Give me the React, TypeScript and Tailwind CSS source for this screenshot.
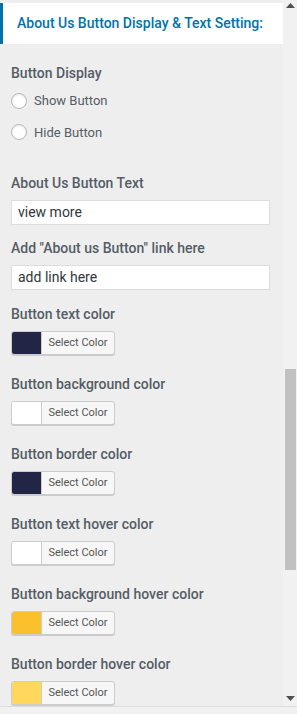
import React from "react";

const font = { fontFamily: "Roboto, 'Noto Sans', sans-serif" };

function Label({ children }: { children: React.ReactNode }) {
  return (
    <div className="text-[14px] leading-[20px] font-medium text-[#555d66]">{children}</div>
  );
}

function ColorItem({ label, color }: { label: string; color: string }) {
  return (
    <div className="flex flex-col">
      <Label>{label}</Label>
      <div className="mt-[7px] flex h-[24px] w-[104px] overflow-hidden rounded-[3px] border border-[#cccccc] bg-[#f7f7f7] shadow-[0_1px_0_#cccccc]">
        <div className="h-full w-[30px] border-r border-[#cccccc]" style={{ backgroundColor: color }} />
        <div className="flex flex-1 items-center justify-center text-[11px] text-[#555555]">Select Color</div>
      </div>
    </div>
  );
}

function Radio({ label }: { label: string }) {
  return (
    <div className="flex items-center gap-[7px]">
      <div className="h-[16px] w-[16px] rounded-full border border-[#b4b9be] bg-white shadow-[inset_0_1px_2px_rgba(0,0,0,0.1)]" />
      <span className="text-[13px] text-[#555d66]">{label}</span>
    </div>
  );
}

export default function App() {
  return (
    <div className="w-[297px] h-[714px] bg-[#eeeeee] overflow-hidden" style={font}>
      <div className="flex h-[707px] border-b border-[#dddddd]">
        <div className="flex-1 overflow-hidden">
          <div className="mt-[3px] flex h-[41px] items-center border-l-[3px] border-[#0073aa] bg-white pl-[14px]">
            <span className="text-[14px] font-medium text-[#0073aa]">About Us Button Display &amp; Text Setting:</span>
          </div>
          <div className="pl-[11px] pr-[13px]">
            <div className="mt-[19px]">
              <Label>Button Display</Label>
            </div>
            <div className="mt-[8px] flex flex-col gap-[12px]">
              <Radio label="Show Button" />
              <Radio label="Hide Button" />
            </div>
            <div className="mt-[31px]">
              <Label>About Us Button Text</Label>
            </div>
            <div className="mt-[7px] flex h-[25px] items-center border border-[#dddddd] bg-white pl-[6px] text-[14px] text-[#32373c]">
              view more
            </div>
            <div className="mt-[13px]">
              <Label>Add "About us Button" link here</Label>
            </div>
            <div className="mt-[7px] flex h-[25px] items-center border border-[#dddddd] bg-white pl-[6px] text-[14px] text-[#32373c]">
              add link here
            </div>
            <div className="mt-[14px] flex flex-col gap-[19px]">
              <ColorItem label="Button text color" color="#232546" />
              <ColorItem label="Button background color" color="#ffffff" />
              <ColorItem label="Button border color" color="#232546" />
              <ColorItem label="Button text hover color" color="#ffffff" />
              <ColorItem label="Button background hover color" color="#fbc12d" />
              <ColorItem label="Button border hover color" color="#ffd75c" />
            </div>
          </div>
        </div>
        <div className="relative w-[14px] bg-[#f1f1f1]">
          <svg className="absolute left-[3px] top-[3px]" width="9" height="5" viewBox="0 0 9 5">
            <path d="M4.5 0 L9 5 L0 5 Z" fill="#505050" />
          </svg>
          <div className="absolute left-[2px] top-[369px] h-[201px] w-[11px] bg-[#c1c1c1]" />
          <svg className="absolute bottom-[5px] left-[3px]" width="9" height="5" viewBox="0 0 9 5">
            <path d="M0 0 L9 0 L4.5 5 Z" fill="#505050" />
          </svg>
        </div>
      </div>
      <div className="h-[6px] bg-[#f1f1f1]" />
    </div>
  );
}
